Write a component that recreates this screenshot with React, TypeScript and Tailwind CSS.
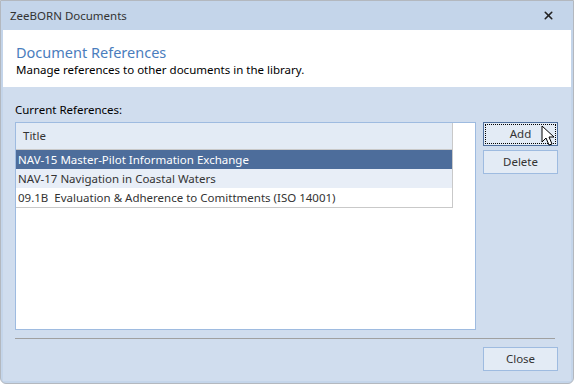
import { X } from "lucide-react";

type Row = {
  title: string;
  selected?: boolean;
  alt?: boolean;
};

const rows: Row[] = [
  { title: "NAV-15 Master-Pilot Information Exchange", selected: true },
  { title: "NAV-17 Navigation in Coastal Waters", alt: true },
  { title: "09.1B  Evaluation & Adherence to Comittments (ISO 14001)" },
];

const Cursor = () => (
  <svg
    width="14"
    height="22"
    viewBox="0 0 14 22"
    className="absolute left-[57px] top-[2px]"
  >
    <path
      d="M1 1 L1 17 L5 13 L8 20 L11 19 L8 12 L13 12 Z"
      fill="#fff"
      stroke="#000"
      strokeWidth="1"
      strokeLinejoin="miter"
    />
  </svg>
);

export default function App() {
  return (
    <div className="w-[574px] h-[386px] bg-white font-['Noto_Sans',sans-serif] text-[11.5px]">
      <div className="w-[574px] h-[384px] flex flex-col bg-[#c4d5ea] border border-[#b3b8bf] rounded-b-[6px] overflow-hidden">
        <div className="h-[29px] flex items-center justify-between pl-[9px] pr-[18px] text-[#333]">
          <span>ZeeBORN Documents</span>
          <X size={13} strokeWidth={3} className="text-[#222]" />
        </div>
        <div className="mx-[2px] flex-1 flex flex-col">
          <div className="h-[57px] bg-white pl-[13px] pt-[13px] flex flex-col">
            <span className="text-[14.5px] leading-[19px] text-[#4a7dbd]">
              Document References
            </span>
            <span className="leading-[16px] text-black">
              Manage references to other documents in the library.
            </span>
          </div>
          <div className="flex-1 bg-[#d0ddee] pl-[12px] pr-[13px] flex flex-col">
            <div className="h-[35px] pt-[15px] leading-[16px] text-black">
              Current References:
            </div>
            <div className="flex gap-[7px]">
              <div className="w-[461px] h-[208px] bg-white border border-[#9ebbe0]">
                <div className="w-[437px] border-r border-b border-[#c9c9c9]">
                  <div className="h-[27px] bg-[#e3ebf5] border-b border-[#c9c9c9] flex items-center pl-[7px] text-[#333]">
                    Title
                  </div>
                  {rows.map((r) => (
                    <div
                      key={r.title}
                      className={
                        "h-[19px] flex items-center pl-[2px] whitespace-pre " +
                        (r.selected
                          ? "bg-[#4d6d9b] text-white"
                          : r.alt
                          ? "bg-[#e8eef7] text-[#333]"
                          : "bg-white text-[#333]")
                      }
                    >
                      {r.title}
                    </div>
                  ))}
                </div>
              </div>
              <div className="flex flex-col gap-[4px]">
                <div className="relative w-[75px] h-[24px] bg-[#e3ebf5] border border-[#4f6f9c] p-[1px]">
                  <div className="w-full h-full border border-dotted border-black flex items-center justify-center text-[#333]">
                    Add
                  </div>
                  <Cursor />
                </div>
                <button className="w-[75px] h-[24px] bg-[#e3ebf5] border border-[#9ebbe0] flex items-center justify-center text-[#333]">
                  Delete
                </button>
              </div>
            </div>
            <div className="mt-[8px] h-[1px] w-[540px] bg-[#a0a0a0]" />
            <div className="flex justify-end pt-[8px]">
              <button className="w-[75px] h-[24px] bg-[#e3ebf5] border border-[#9ebbe0] flex items-center justify-center text-[#333]">
                Close
              </button>
            </div>
          </div>
        </div>
        <div className="h-[2px]" />
      </div>
    </div>
  );
}
